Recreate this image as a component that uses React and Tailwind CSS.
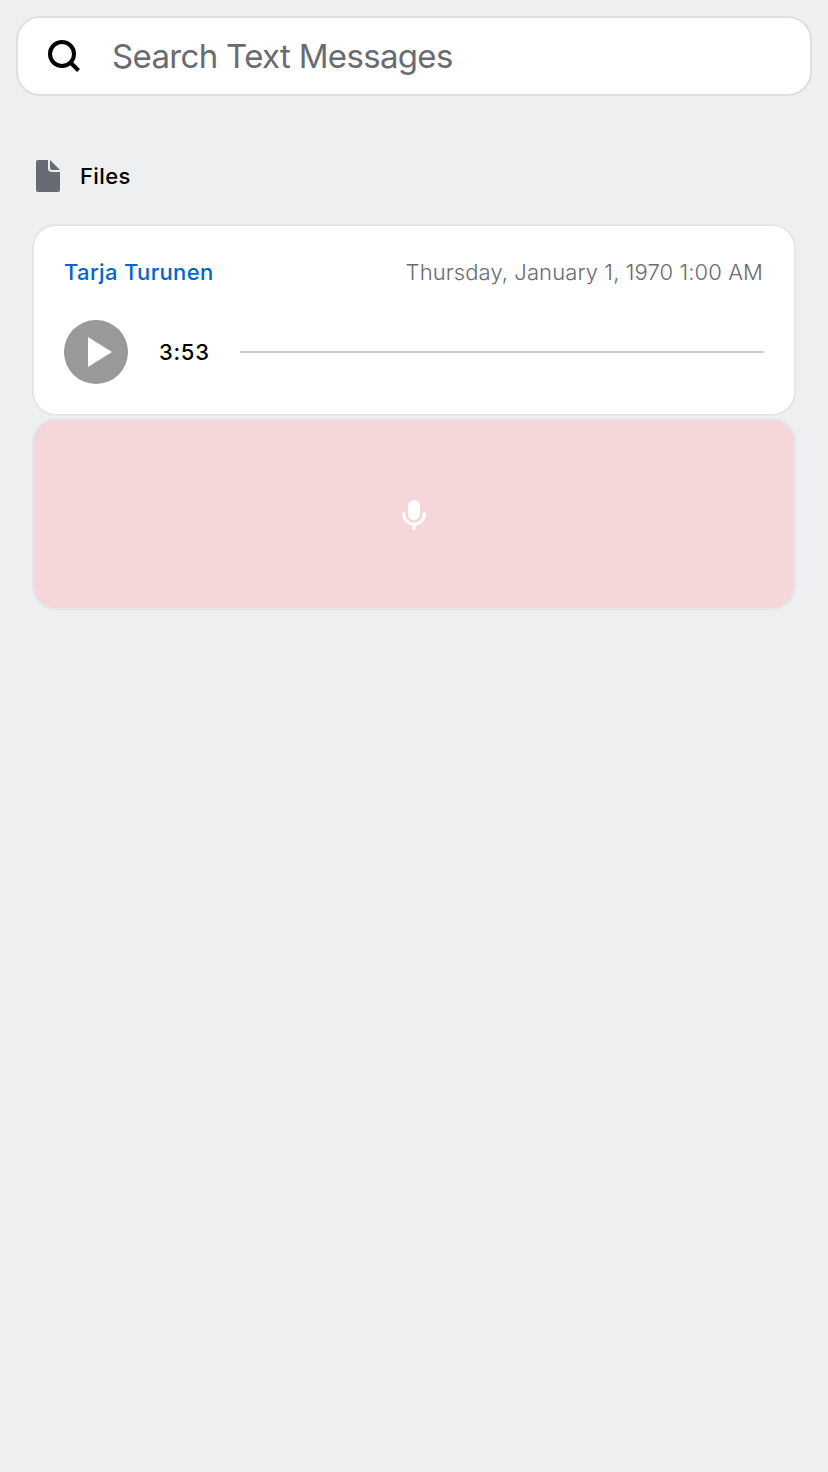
function SearchIcon() {
  return (
    <svg className="size-8 shrink-0" viewBox="0 0 32 32" fill="none" stroke="#000" strokeWidth="4">
      <circle cx="14" cy="14" r="12" />
      <path d="M22.5 22.5l8 8" />
    </svg>
  );
}

function FileIcon() {
  return (
    <svg className="h-8 w-6 shrink-0" viewBox="0 0 24 32" fill="#696b73">
      <path d="M2 0h10v8q0 4 4 4h8v18q0 2-2 2H2q-2 0-2-2V2Q0 0 2 0z" />
      <path d="M14 0l10 10h-8q-2 0-2-2z" />
    </svg>
  );
}

function PlayButton() {
  return (
    <button type="button" aria-label="Play" className="size-16 shrink-0">
      <svg className="size-16" viewBox="0 0 64 64">
        <circle cx="32" cy="32" r="32" fill="#999999" />
        <path d="M24 17v30l24-15z" fill="#fff" />
      </svg>
    </button>
  );
}

function MicIcon() {
  return (
    <svg className="h-8 w-6" viewBox="0 0 24 32" fill="none">
      <rect x="6" y="2" width="12" height="20" rx="6" fill="#fff" />
      <path d="M1.75 14.5v1.5a10.25 10.25 0 0 0 20.5 0v-1.5M12 26v6" stroke="#fff" strokeWidth="3" />
    </svg>
  );
}

export default function App() {
  return (
    <main className="flex min-h-screen flex-col bg-[#edeff1] p-4 font-['Inter',sans-serif]">
      <div className="flex h-20 items-center gap-8 rounded-3xl border-2 border-[#dcdfe3] bg-white px-[30px]">
        <SearchIcon />
        <span className="whitespace-nowrap text-[33px] leading-10 tracking-[-0.67px] text-[#696b73]">
          Search Text Messages
        </span>
      </div>
      <section className="mt-16 flex flex-col px-4">
        <h2 className="flex h-8 items-center gap-5 pl-1 text-[22px] font-medium leading-7 tracking-[0.4px] text-black">
          <FileIcon />
          Files
        </h2>
        <div className="mt-8 flex flex-col gap-0.5">
          <article className="flex h-48 flex-col rounded-3xl border-2 border-[#e4e7ea] bg-white px-[30px] pt-8">
            <div className="flex h-7 items-center justify-between whitespace-nowrap text-[22px] leading-7">
              <span className="font-medium tracking-[0.34px] text-[#0066cc]">Tarja Turunen</span>
              <span className="mr-px font-light tracking-[0.1px] text-[#696b73]">Thursday, January 1, 1970 1:00 AM</span>
            </div>
            <div className="mt-[34px] flex items-center">
              <PlayButton />
              <span className="ml-[30px] w-[82px] pl-px text-[22px] font-medium leading-7 tracking-[0.7px] text-black">
                3:53
              </span>
              <div className="h-0.5 flex-1 bg-[#c8cbcf]" />
            </div>
          </article>
          <article className="flex h-48 items-center justify-center rounded-3xl border-2 border-[#e4e7ea] bg-[#f5d7d9]">
            <MicIcon />
          </article>
        </div>
      </section>
    </main>
  );
}
